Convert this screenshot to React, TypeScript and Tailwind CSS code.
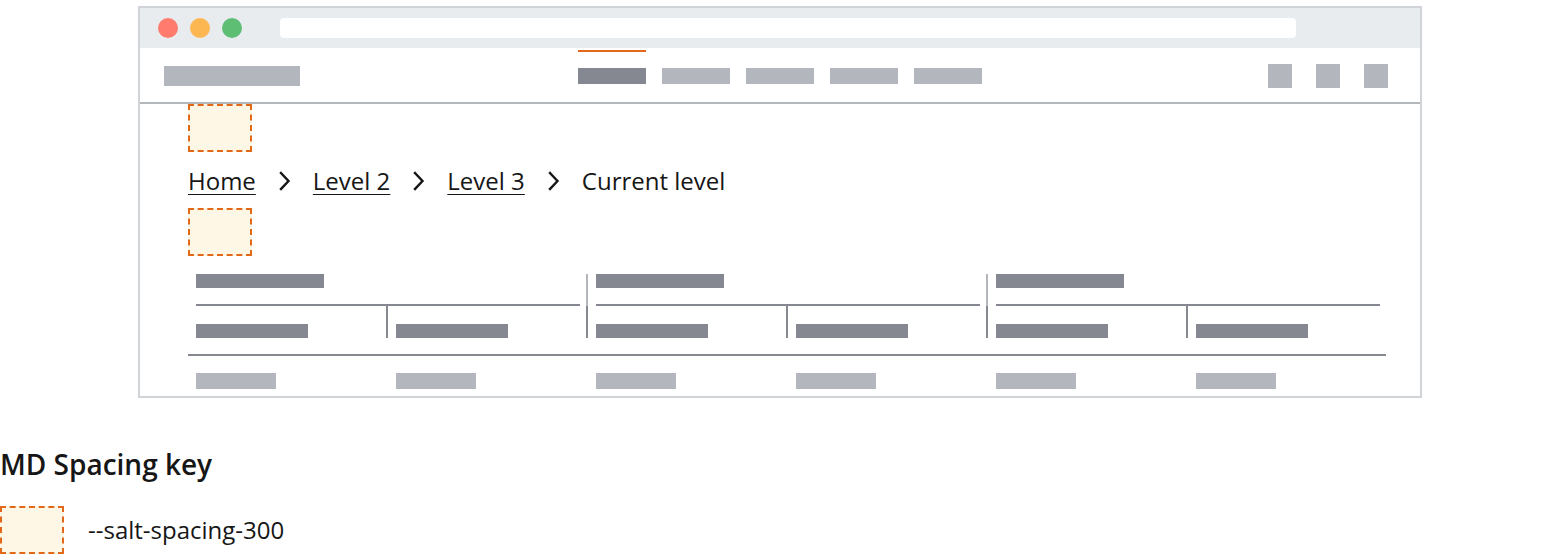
import React from "react";

const Chevron = () => (
  <svg width="13" height="20" viewBox="0 0 13 20" className="shrink-0">
    <polyline points="3,2 10.5,10 3,18" fill="none" stroke="#161616" strokeWidth="2.4" strokeLinecap="square" strokeLinejoin="miter" />
  </svg>
);

const SpacingBox = () => (
  <div className="w-[64px] h-[48px] bg-[#fff7e6] border-2 border-dashed border-[#e3691a] shrink-0" />
);

const Group = ({ sep }: { sep: boolean }) => (
  <div className="flex w-[400px]">
    <div className="flex flex-col flex-1 pl-2">
      <div className="w-[128px] h-[14px] bg-[#868891]" />
      <div className="w-[384px] h-[2px] bg-[#868891] mt-[16px]" />
      <div className="flex h-[32px]">
        <div className="flex w-[192px] h-full">
          <div className="flex-1 flex items-end">
            <div className="w-[112px] h-[14px] bg-[#868891]" />
          </div>
          <div className="w-[2px] h-full bg-[#868891]" />
        </div>
        <div className="flex items-end pl-2">
          <div className="w-[112px] h-[14px] bg-[#868891]" />
        </div>
      </div>
    </div>
    {sep && (
      <div className="flex flex-col w-[2px]">
        <div className="h-[32px] bg-[#b3b6bd]" />
        <div className="h-[32px] bg-[#868891]" />
      </div>
    )}
  </div>
);

export default function App() {
  const font = { fontFamily: '"Open Sans", "Noto Sans", sans-serif' };
  return (
    <div className="w-[1560px] h-[554px] bg-white overflow-hidden text-[#161616]" style={font}>
      <div className="ml-[138px] mt-[6px] w-[1284px] border-2 border-[#d0d4d9] flex flex-col">
        {/* title bar */}
        <div className="h-[40px] bg-[#e8ecef] flex items-center pl-[18px]">
          <div className="flex gap-[12px]">
            <div className="w-[20px] h-[20px] rounded-full bg-[#ff7b6e]" />
            <div className="w-[20px] h-[20px] rounded-full bg-[#fdb752]" />
            <div className="w-[20px] h-[20px] rounded-full bg-[#5dbe74]" />
          </div>
          <div className="ml-[38px] w-[1016px] h-[20px] rounded-[4px] bg-white" />
        </div>
        {/* nav */}
        <div className="h-[56px] border-b-2 border-[#b4b7bc] flex items-start pl-[24px] pr-[32px] relative">
          <div className="w-[136px] h-[20px] bg-[#b3b6bd] mt-[18px]" />
          <div className="flex gap-[16px] ml-[278px]">
            <div className="flex flex-col w-[68px]">
              <div className="h-[2px] mt-[2px] bg-[#e3691a]" />
              <div className="h-[16px] mt-[16px] bg-[#868891]" />
            </div>
            {[0, 1, 2, 3].map((i) => (
              <div key={i} className="w-[68px] h-[16px] mt-[20px] bg-[#b3b6bd]" />
            ))}
          </div>
          <div className="ml-auto flex gap-[24px] mt-[16px]">
            {[0, 1, 2].map((i) => (
              <div key={i} className="w-[24px] h-[24px] bg-[#b3b6bd]" />
            ))}
          </div>
        </div>
        {/* content */}
        <div className="pl-[48px] flex flex-col h-[292px]">
          <SpacingBox />
          <div className="h-[56px] flex items-center gap-[22px] text-[24px] leading-none pt-[2px]">
            <a className="underline underline-offset-[4px] decoration-1">Home</a>
            <Chevron />
            <a className="underline underline-offset-[4px] decoration-1">Level 2</a>
            <Chevron />
            <a className="underline underline-offset-[4px] decoration-1">Level 3</a>
            <Chevron />
            <span>Current level</span>
          </div>
          <SpacingBox />
          <div className="flex mt-[18px]">
            <Group sep />
            <Group sep />
            <Group sep={false} />
          </div>
          <div className="w-[1198px] h-[2px] bg-[#868891] mt-[16px]" />
          <div className="flex mt-[17px]">
            {[0, 1, 2, 3, 4, 5].map((i) => (
              <div key={i} className="w-[200px] pl-2">
                <div className="w-[80px] h-[16px] bg-[#b3b6bd]" />
              </div>
            ))}
          </div>
        </div>
      </div>
      <div className="mt-[52px] text-[28px] font-semibold leading-none">MD Spacing key</div>
      <div className="mt-[28px] flex items-center gap-[24px]">
        <SpacingBox />
        <span className="text-[24px] leading-none">--salt-spacing-300</span>
      </div>
    </div>
  );
}
